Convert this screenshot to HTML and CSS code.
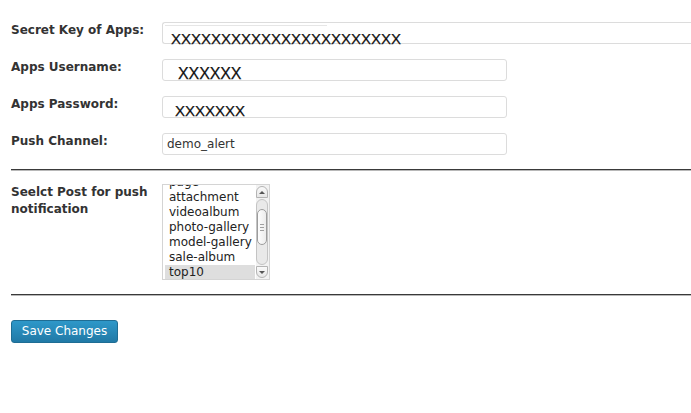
FILE: index.html
```html
<!DOCTYPE html>
<html>
<head>
<meta charset="utf-8">
<link rel="stylesheet" href="styles.css">
</head>
<body>
<div class="form">
  <div class="row">
    <div class="lbl">Secret Key of Apps:</div>
    <div class="field field-wide">
      <div class="shade"></div>
      <div class="xs xs-secret">XXXXXXXXXXXXXXXXXXXXXXX</div>
    </div>
  </div>
  <div class="row">
    <div class="lbl">Apps Username:</div>
    <div class="field field-mid">
      <div class="xs xs-user">XXXXXX</div>
    </div>
  </div>
  <div class="row">
    <div class="lbl">Apps Password:</div>
    <div class="field field-mid">
      <div class="xs xs-pass">XXXXXXX</div>
    </div>
  </div>
  <div class="row">
    <div class="lbl">Push Channel:</div>
    <div class="field field-mid field-text">demo_alert</div>
  </div>
  <hr class="sep sep-top">
  <div class="row row-select">
    <div class="lbl lbl-wrap">Seelct Post for push notification</div>
    <div class="listbox">
      <div class="items">
        <div class="item">page</div>
        <div class="item">attachment</div>
        <div class="item">videoalbum</div>
        <div class="item">photo-gallery</div>
        <div class="item">model-gallery</div>
        <div class="item">sale-album</div>
        <div class="item item-selected">top10</div>
      </div>
      <div class="scrollbar">
        <div class="sb-btn sb-up"><span class="tri tri-up"></span></div>
        <div class="sb-track">
          <div class="sb-thumb">
            <span class="grip"></span>
            <span class="grip"></span>
            <span class="grip"></span>
          </div>
        </div>
        <div class="sb-btn sb-down"><span class="tri tri-down"></span></div>
      </div>
    </div>
  </div>
  <hr class="sep sep-bottom">
  <button class="btn-primary">Save Changes</button>
</div>
</body>
</html>
```

FILE: styles.css
```css
html, body {
  margin: 0;
  padding: 0;
  overflow: hidden;
  background: #fff;
}

body {
  font-family: "DejaVu Sans", sans-serif;
  font-size: 12px;
  color: #333;
}

.form {
  padding: 22px 0 0 11px;
}

.row {
  display: flex;
  align-items: flex-start;
  margin-bottom: 15px;
}

.lbl {
  width: 151px;
  flex: none;
  font-weight: bold;
  font-size: 12px;
  line-height: 16px;
  color: #333;
}

.field {
  box-sizing: border-box;
  height: 22px;
  border: 1px solid #dcdcdc;
  border-radius: 3px;
  background: #fff;
  flex: none;
}

.field-wide {
  width: 560px;
  padding: 2px 0 0 2px;
  border-right: none;
  border-radius: 3px 0 0 3px;
}

.field-mid {
  width: 345px;
}

.shade {
  width: 162px;
  border-top: 1px solid #e6e6e6;
}

.xs {
  font-family: "Liberation Sans", Arial, sans-serif;
  font-size: 15px;
  line-height: 17px;
  color: #111;
  white-space: nowrap;
  -webkit-text-stroke: 0.25px #111;
}

.xs-secret {
  margin-top: 4px;
  padding-left: 6px;
}

.xs-user {
  padding: 5px 0 0 15px;
  font-size: 16px;
  letter-spacing: -0.1px;
}

.xs-pass {
  padding: 5px 0 0 12px;
}

.field-text {
  padding-left: 4px;
  line-height: 20px;
  color: #333;
}

.sep {
  margin: 0;
  border: 0;
  border-top: 1px solid #3a3a3a;
  border-bottom: 1px solid #b8b8b8;
  height: 0;
}

.sep-top {
  margin-top: -1px;
  margin-bottom: 13px;
}

.lbl-wrap {
  line-height: 17px;
  width: 145px;
  margin-right: 6px;
}

.row-select {
  margin-bottom: 14px;
}

.listbox {
  box-sizing: border-box;
  width: 108px;
  height: 96px;
  border: 1px solid #d4d4d4;
  display: flex;
  overflow: hidden;
  background: #fff;
}

.items {
  flex: 1;
  margin-top: -10px;
  padding: 0 1px 0 2px;
}

.item {
  line-height: 15px;
  height: 15px;
  padding-left: 4px;
  color: #222;
  white-space: nowrap;
}

.item-selected {
  background: #dedede;
}

.scrollbar {
  width: 13px;
  flex: none;
  display: flex;
  flex-direction: column;
  padding: 1px 1px 1px 0;
  box-sizing: border-box;
  background: #f2f2f2;
}

.sb-btn {
  height: 12px;
  display: flex;
  align-items: center;
  justify-content: center;
  border: 1px solid #b4b4b4;
  background: linear-gradient(#fafafa, #e6e6e6);
  box-sizing: border-box;
}

.sb-up {
  border-radius: 6px 6px 0 0;
}

.sb-down {
  border-radius: 0 0 6px 6px;
}

.tri {
  width: 0;
  height: 0;
  border-left: 3px solid transparent;
  border-right: 3px solid transparent;
}

.tri-up {
  border-bottom: 3px solid #555;
}

.tri-down {
  border-top: 3px solid #555;
}

.sb-track {
  flex: 1;
  border: 1px solid #c4c4c4;
  border-radius: 6px;
  background: #e9e9e9;
  margin: 1px 0;
  box-sizing: border-box;
}

.sb-thumb {
  box-sizing: border-box;
  margin-top: 9px;
  height: 36px;
  border: 1px solid #9c9c9c;
  border-radius: 6px;
  background: linear-gradient(90deg, #fdfdfd, #ececec);
  display: flex;
  flex-direction: column;
  align-items: center;
  justify-content: center;
  gap: 2px;
}

.grip {
  width: 4px;
  height: 1px;
  background: #a0a0a0;
}

.sep-bottom {
  margin-bottom: 24px;
}

.btn-primary {
  box-sizing: border-box;
  width: 107px;
  height: 23px;
  padding: 0;
  border: 1px solid #1f6d94;
  border-radius: 3px;
  background: linear-gradient(#2e98c9, #2179a6);
  color: #fff;
  font-family: "DejaVu Sans", sans-serif;
  font-size: 12px;
  line-height: 21px;
  text-align: center;
  display: block;
}
```
